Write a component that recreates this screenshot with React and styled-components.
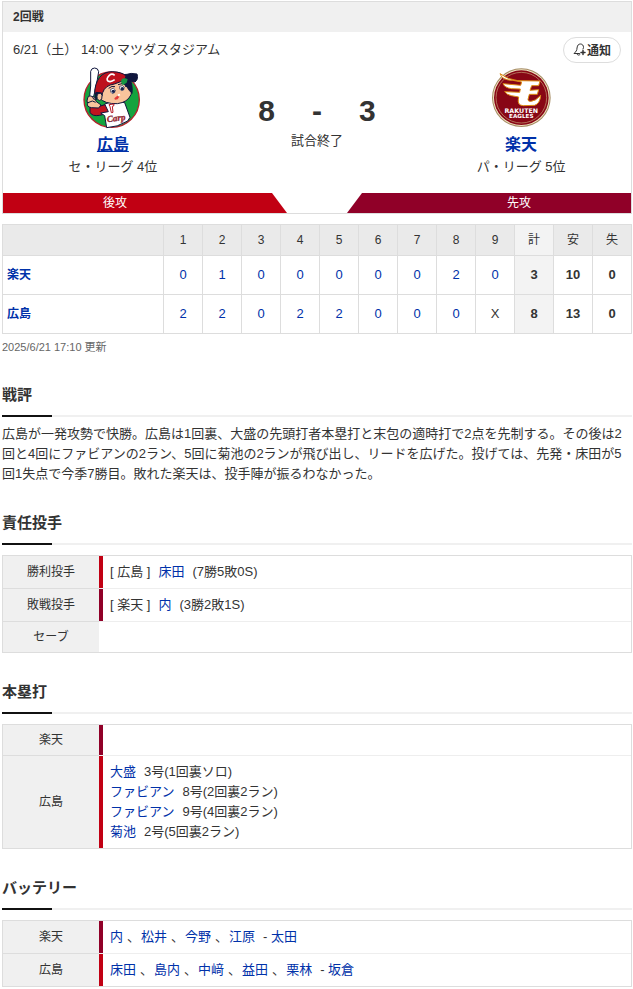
import styled, { createGlobalStyle } from "styled-components";

const GlobalStyle = createGlobalStyle`
    :root {
        --text-color: #333;
        --link-color: #0031a9;
        --border-color: #ddd;
        --light-border-color: #eee;
        --label-background-color: #f0f0f0;
        --carp-color: #c10013;
        --eagles-color: #900028;
    }

    * {
        box-sizing: border-box;
    }

    body {
        margin: 0;
        background-color: #fff;
        color: var(--text-color);
        font-family: "Liberation Sans", "Noto Sans CJK JP", sans-serif;
        font-size: 13px;
        line-height: 20px;
    }
`;

const Page = styled.main`
    padding: 1px 1px 1px 2px;
`;

const Link = styled.a`
    color: var(--link-color);
    font-weight: ${(props) => (props.$bold ? "bold" : "normal")};
    text-decoration: none;

    &:hover {
        text-decoration: underline;
    }
`;

const GameCard = styled.section`
    border: 1px solid var(--border-color);
`;

const GameTitle = styled.h1`
    margin: 0;
    padding: 0 10px;
    background-color: var(--label-background-color);
    font-size: 12px;
    line-height: 30px;
`;

const GameInfo = styled.div`
    display: flex;
    align-items: center;
    justify-content: space-between;
    padding: 5px 10px 4px;
`;

const NotifyButton = styled.button`
    display: flex;
    align-items: center;
    gap: 1px;
    height: 26px;
    padding: 0 9px 2px;
    border: 1px solid var(--border-color);
    border-radius: 13px;
    background-color: #fff;
    color: var(--text-color);
    font-family: inherit;
    font-size: 12px;
    font-weight: bold;
    cursor: pointer;
`;

const Matchup = styled.div`
    display: grid;
    grid-template-columns: 35fr 30fr 35fr;
    padding-bottom: 16px;
    text-align: center;
`;

const Team = styled.div`
    display: flex;
    flex-direction: column;
    align-items: center;
`;

const TeamName = styled.a`
    margin-top: 4px;
    color: var(--link-color);
    font-size: 16px;
    font-weight: bold;
    line-height: 24px;
    text-decoration: ${(props) => (props.$active ? "underline" : "none")};
`;

const Score = styled.div`
    display: flex;
    justify-content: center;
    gap: 37px;
    padding-top: 28px;
    font-size: 30px;
    font-weight: bold;
    line-height: 32px;
`;

const GameStatus = styled.p`
    margin: 4px 0 0;
`;

const Sides = styled.div`
    display: flex;
    justify-content: space-between;
    color: #fff;
    font-size: 12px;
    text-align: center;
`;

const HomeSide = styled.div`
    width: calc(50% - 30px);
    padding-right: 60px;
    background-color: var(--carp-color);
    clip-path: polygon(0 0, calc(100% - 15px) 0, 100% 100%, 0 100%);
`;

const AwaySide = styled.div`
    width: calc(50% - 30px);
    padding-left: 60px;
    background-color: var(--eagles-color);
    clip-path: polygon(15px 0, 100% 0, 100% 100%, 0 100%);
`;

const LineScore = styled.table`
    width: 100%;
    margin-top: 10px;
    border-collapse: collapse;
    table-layout: fixed;
    text-align: center;

    & th,
    & td {
        padding: 0;
        border: 1px solid var(--border-color);
    }
`;

const InningHead = styled.th`
    width: ${(props) => (props.$team ? "auto" : "39px")};
    height: 31px;
    background-color: ${(props) => (props.$total ? "#f3f3f3" : "#eaeaea")};
    font-size: 12px;
    font-weight: normal;
`;

const LineTeam = styled.th`
    && {
        padding-left: 4px;
    }
    font-size: 12px;
    text-align: left;
`;

const LineCell = styled.td`
    height: 39px;
    background-color: ${(props) => (props.$total ? "#f3f3f3" : "#fff")};
    font-weight: ${(props) => (props.$bold ? "bold" : "normal")};
`;

const UpdatedAt = styled.p`
    margin: 5px 0 0;
    color: #666;
    font-size: 11px;
    line-height: 17px;
`;

const SectionTitle = styled.h2`
    margin: 29px 0 0;
    font-size: 15px;
    line-height: 20px;

    &::after {
        content: "";
        display: block;
        height: 2px;
        margin-top: 10px;
        background: linear-gradient(#111, #111) no-repeat 0 0 / 50px 2px #f0f0f0;
    }
`;

const Review = styled.p`
    margin: 7px 0 0;
`;

const InfoTable = styled.table`
    width: 100%;
    margin-top: 10px;
    border: 1px solid var(--border-color);
    border-collapse: separate;
    border-spacing: 0;

    & tr:last-child > * {
        border-bottom: none;
    }
`;

const InfoLabel = styled.th`
    width: 96px;
    padding: 6px 0;
    border-bottom: 1px solid var(--border-color);
    background-color: var(--label-background-color);
    font-size: 12px;
    font-weight: normal;
    line-height: 18px;
`;

const InfoValue = styled.td`
    padding: 6px 11px;
    border-bottom: 1px solid var(--light-border-color);
    box-shadow: ${(props) =>
        props.$team ? `inset 4px 0 var(--${props.$team}-color)` : "none"};
`;

const TeamTag = styled.span`
    margin-right: 8px;
`;

const Player = styled(Link)`
    margin-right: ${(props) => (props.$spaced ? "8px" : "0")};
`;

const Separator = styled.span`
    margin: 0 1px 0 4px;
`;

const INNINGS = ["1", "2", "3", "4", "5", "6", "7", "8", "9"];

const LINE_SCORES = [
    {
        team: "楽天",
        runs: ["0", "1", "0", "0", "0", "0", "0", "2", "0"],
        totals: ["3", "10", "0"],
    },
    {
        team: "広島",
        runs: ["2", "2", "0", "2", "2", "0", "0", "0", "X"],
        totals: ["8", "13", "0"],
    },
];

const PITCHERS = [
    {
        label: "勝利投手",
        key: "carp",
        team: "広島",
        name: "床田",
        record: "(7勝5敗0S)",
    },
    {
        label: "敗戦投手",
        key: "eagles",
        team: "楽天",
        name: "内",
        record: "(3勝2敗1S)",
    },
    { label: "セーブ" },
];

const HOME_RUNS = [
    { team: "楽天", key: "eagles", hits: [] },
    {
        team: "広島",
        key: "carp",
        hits: [
            { name: "大盛", detail: "3号(1回裏ソロ)" },
            { name: "ファビアン", detail: "8号(2回裏2ラン)" },
            { name: "ファビアン", detail: "9号(4回裏2ラン)" },
            { name: "菊池", detail: "2号(5回裏2ラン)" },
        ],
    },
];

const BATTERIES = [
    {
        team: "楽天",
        key: "eagles",
        pitchers: ["内", "松井", "今野", "江原"],
        catcher: "太田",
    },
    {
        team: "広島",
        key: "carp",
        pitchers: ["床田", "島内", "中﨑", "益田", "栗林"],
        catcher: "坂倉",
    },
];

function BellPlusIcon() {
    return (
        <svg
            width="13"
            height="14"
            viewBox="0 0 26 28"
            fill="none"
            stroke="#333"
            strokeWidth="2"
            strokeLinecap="round"
            strokeLinejoin="round"
            aria-hidden="true"
        >
            <path d="M13 23H2c4-4 6-6 6-11 1-6 3-8 7-8s6 3 6 7l-1 3" />
            <path d="M8 24c1 3 4 3 6 1" />
            <path d="M20 17v8M16 21h8" strokeWidth="3" />
        </svg>
    );
}

function CarpLogo() {
    return (
        <svg
            width="60"
            height="62"
            viewBox="24 21 180 186"
            strokeLinejoin="round"
            aria-hidden="true"
        >
            <circle
                cx="110"
                cy="119"
                r="83"
                fill="#14a33e"
                stroke="#b5202b"
                strokeWidth="4"
            />
            <g stroke="#10163d" strokeWidth="3">
                <path
                    d="M47 34q2-10 12-10t12 11l-4 24-8 38-6 24-10-3 4-40z"
                    fill="#fff"
                />
                <path
                    d="M45 134l31 4 28-8 4 28-34 8q-23 4-29-9z"
                    fill="#c0141f"
                />
                <path
                    d="M89 132l29-9 31 5 16 44-7 11q-31 19-63 20l-6-36-12-8 23-4z"
                    fill="#fff"
                />
                <path
                    d="M72 91q8-28 41-34l46 8q15 22 9 39-10 23-41 27-39 1-53-17z"
                    fill="#f9c49c"
                />
                <path
                    d="M149 62l13-8q12 17 9 46-8-7-15-19l-13-12z"
                    fill="#10163d"
                />
                <path
                    d="M141 56q1-14 15-13 10-5 30-1 5 16-6 24-20-6-31 3z"
                    fill="#10163d"
                />
                <path
                    d="M59 101q0-30 15-49 14-17 38-17 29 1 41 13 1 9-13 16l-22 8q-28 4-35 26l-4 11z"
                    fill="#be111d"
                />
                <path
                    d="M63 97l17 2 2 8q-5-9-13-5-9 8-4 17-8-7-2-22z"
                    fill="#10163d"
                />
                <path
                    d="M67 103q11-8 14 3 2 13-7 16-11-3-7-19z"
                    fill="#f9c49c"
                />
                <path
                    d="M38 114q1-8 9-6l12 4 4 12 15 11-7 9-22-1q-15-3-11-13-4-6 0-16z"
                    fill="#f9c49c"
                />
                <path d="M39 128l13-5 10 4M52 112l7 8" fill="none" />
            </g>
            <path
                d="M139 59q8-8 19-1l-3 10-11 7q-7-3-5-16z"
                fill="#159642"
            />
            <path
                d="M119 46q-8-7-16 0-11 11-4 17 8 5 20-4"
                fill="none"
                stroke="#fff"
                strokeWidth="5"
            />
            <g fill="#fff" stroke="#10163d" strokeWidth="2">
                <path d="M107 88q9-8 14 2 0 10-9 11-7-3-5-13z" />
                <path d="M134 79q9-6 14 3 0 11-9 10-7-4-5-13z" />
            </g>
            <circle cx="115" cy="94" r="5" fill="#17214c" />
            <circle cx="142" cy="86" r="5" fill="#17214c" />
            <path
                d="M101 85q10-9 19-5M129 74l12-3M151 81l5-6"
                fill="none"
                stroke="#10163d"
                strokeWidth="3"
            />
            <path d="M118 115l9-8 6 3-5 8-8 1z" fill="#e43a3a" />
            <path d="M128 103l6-2 2 5-6 3z" fill="#fff" />
            <path
                d="M102 134l15-2-1 6-4 1 2 18-5 1-4-18z"
                fill="#fff"
                stroke="#b71925"
                strokeWidth="3"
            />
            <text
                x="97"
                y="187"
                fill="#c0141f"
                stroke="#641c2d"
                strokeWidth="1"
                fontFamily="Liberation Serif, serif"
                fontSize="27"
                fontStyle="italic"
                fontWeight="bold"
                transform="rotate(-8 97 187)"
            >
                Carp
            </text>
        </svg>
    );
}

function EaglesLogo() {
    return (
        <svg
            width="60"
            height="62"
            viewBox="18 21 180 186"
            aria-hidden="true"
        >
            <circle cx="109" cy="113" r="88" fill="#a58b63" />
            <circle cx="109" cy="113" r="85" fill="#f2e5c4" />
            <circle cx="109" cy="113" r="82" fill="#880615" />
            <circle
                cx="109"
                cy="113"
                r="76"
                fill="none"
                stroke="#c7a478"
                strokeWidth="2"
            />
            <g
                fill="#fff"
                stroke="#dd8b12"
                strokeWidth="3"
                strokeLinejoin="round"
            >
                <path d="M45 41q24 18 53 21l67 1-4 14h-21l-5 14 26-2-4 14h-24l-4 15q-1 7 9 6 13 0 29-18-2 25-18 30l-34 1q-18-1-15-19l1-7-22-4q-14-3-20-12l45 2 2-10-27-1q-20-3-25-15l53 5 3-10-27-5Q51 61 45 41z" />
            </g>
            <g
                fill="#fff"
                fontFamily="DejaVu Sans, sans-serif"
                fontWeight="bold"
                textAnchor="middle"
            >
                <text x="109" y="159" fontSize="19">
                    RAKUTEN
                </text>
                <text x="109" y="175" fontSize="17">
                    EAGLES
                </text>
            </g>
        </svg>
    );
}

function Scoreboard() {
    return (
        <GameCard>
            <GameTitle>2回戦</GameTitle>
            <GameInfo>
                <span>6/21（土） 14:00 マツダスタジアム</span>
                <NotifyButton type="button">
                    <BellPlusIcon />
                    通知
                </NotifyButton>
            </GameInfo>
            <Matchup>
                <Team>
                    <CarpLogo />
                    <TeamName href="#carp" $active>
                        広島
                    </TeamName>
                    <span>セ・リーグ 4位</span>
                </Team>
                <div>
                    <Score>
                        <span>8</span>
                        <span>-</span>
                        <span>3</span>
                    </Score>
                    <GameStatus>試合終了</GameStatus>
                </div>
                <Team>
                    <EaglesLogo />
                    <TeamName href="#eagles">楽天</TeamName>
                    <span>パ・リーグ 5位</span>
                </Team>
            </Matchup>
            <Sides>
                <HomeSide>後攻</HomeSide>
                <AwaySide>先攻</AwaySide>
            </Sides>
        </GameCard>
    );
}

function InningTable() {
    return (
        <LineScore>
            <thead>
                <tr>
                    <InningHead $team />
                    {INNINGS.map((inning) => (
                        <InningHead key={inning}>{inning}</InningHead>
                    ))}
                    <InningHead $total>計</InningHead>
                    <InningHead>安</InningHead>
                    <InningHead>失</InningHead>
                </tr>
            </thead>
            <tbody>
                {LINE_SCORES.map(({ team, runs, totals }) => (
                    <tr key={team}>
                        <LineTeam scope="row">
                            <Link href="#team" $bold>
                                {team}
                            </Link>
                        </LineTeam>
                        {runs.map((run, i) => (
                            <LineCell key={i}>
                                {run === "X" ? (
                                    run
                                ) : (
                                    <Link href="#inning">{run}</Link>
                                )}
                            </LineCell>
                        ))}
                        {totals.map((total, i) => (
                            <LineCell key={i} $bold $total={i === 0}>
                                {total}
                            </LineCell>
                        ))}
                    </tr>
                ))}
            </tbody>
        </LineScore>
    );
}

function App() {
    return (
        <>
            <GlobalStyle />
            <Page>
                <Scoreboard />
                <InningTable />
                <UpdatedAt>2025/6/21 17:10 更新</UpdatedAt>

                <SectionTitle>戦評</SectionTitle>
                <Review>
                    広島が一発攻勢で快勝。広島は1回裏、大盛の先頭打者本塁打と末包の適時打で2点を先制する。その後は2回と4回にファビアンの2ラン、5回に菊池の2ランが飛び出し、リードを広げた。投げては、先発・床田が5回1失点で今季7勝目。敗れた楽天は、投手陣が振るわなかった。
                </Review>

                <SectionTitle>責任投手</SectionTitle>
                <InfoTable>
                    <tbody>
                        {PITCHERS.map(({ label, key, team, name, record }) => (
                            <tr key={label}>
                                <InfoLabel scope="row">{label}</InfoLabel>
                                <InfoValue $team={key}>
                                    {name && (
                                        <>
                                            <TeamTag>[ {team} ]</TeamTag>
                                            <Player href="#player" $spaced>
                                                {name}
                                            </Player>
                                            {record}
                                        </>
                                    )}
                                </InfoValue>
                            </tr>
                        ))}
                    </tbody>
                </InfoTable>

                <SectionTitle>本塁打</SectionTitle>
                <InfoTable>
                    <tbody>
                        {HOME_RUNS.map(({ team, key, hits }) => (
                            <tr key={team}>
                                <InfoLabel scope="row">{team}</InfoLabel>
                                <InfoValue $team={key}>
                                    {hits.map(({ name, detail }) => (
                                        <div key={detail}>
                                            <Player href="#player" $spaced>
                                                {name}
                                            </Player>
                                            {detail}
                                        </div>
                                    ))}
                                </InfoValue>
                            </tr>
                        ))}
                    </tbody>
                </InfoTable>

                <SectionTitle>バッテリー</SectionTitle>
                <InfoTable>
                    <tbody>
                        {BATTERIES.map(({ team, key, pitchers, catcher }) => (
                            <tr key={team}>
                                <InfoLabel scope="row">{team}</InfoLabel>
                                <InfoValue $team={key}>
                                    {pitchers.map((name, i) => (
                                        <span key={name}>
                                            {i > 0 && <Separator>、</Separator>}
                                            <Player
                                                href="#player"
                                                $spaced={
                                                    i === pitchers.length - 1
                                                }
                                            >
                                                {name}
                                            </Player>
                                        </span>
                                    ))}
                                    {"- "}
                                    <Player href="#player">{catcher}</Player>
                                </InfoValue>
                            </tr>
                        ))}
                    </tbody>
                </InfoTable>
            </Page>
        </>
    );
}

export default App;
